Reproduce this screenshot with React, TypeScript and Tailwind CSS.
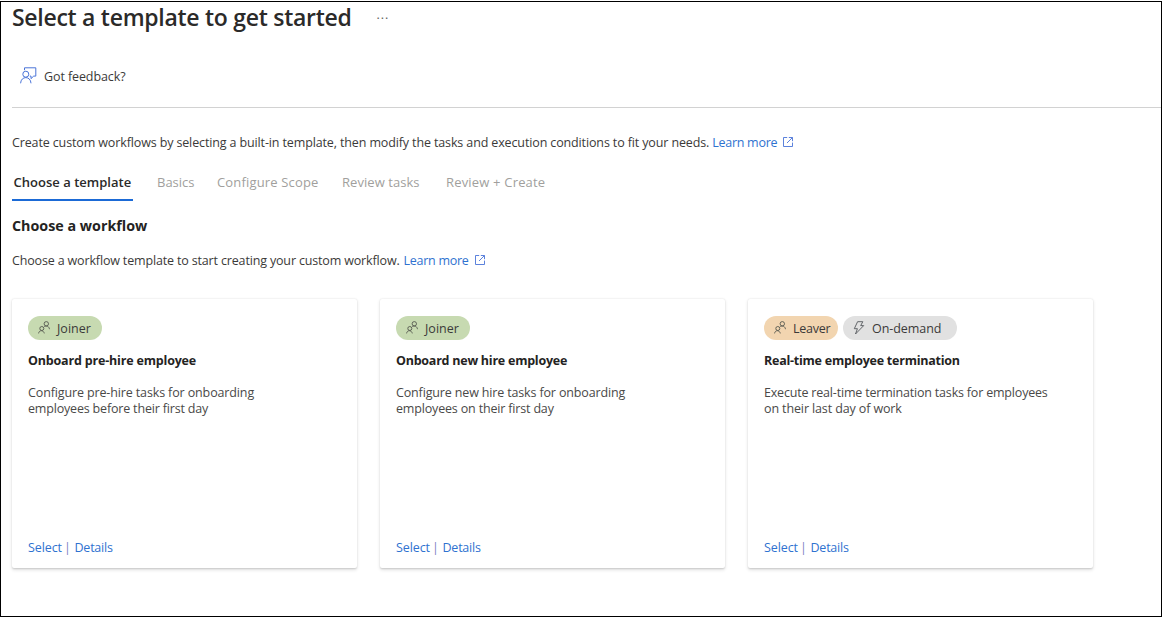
type Text = { text: string; spacing: string };
type Badge = Text & { kind: "joiner" | "leaver" | "demand" };
type Template = { badges: Badge[]; title: Text; lines: Text[] };

const joiner: Badge = { kind: "joiner", text: "Joiner", spacing: "tracking-[0px]" };

const templates: Template[] = [
  {
    badges: [joiner],
    title: { text: "Onboard pre-hire employee", spacing: "tracking-[-0.18px]" },
    lines: [
      { text: "Configure pre-hire tasks for onboarding", spacing: "tracking-[-0.13px]" },
      { text: "employees before their first day", spacing: "tracking-[-0.18px]" },
    ],
  },
  {
    badges: [joiner],
    title: { text: "Onboard new hire employee", spacing: "tracking-[-0.24px]" },
    lines: [
      { text: "Configure new hire tasks for onboarding", spacing: "tracking-[-0.15px]" },
      { text: "employees on their first day", spacing: "tracking-[-0.17px]" },
    ],
  },
  {
    badges: [
      { kind: "leaver", text: "Leaver", spacing: "tracking-[-0.25px]" },
      { kind: "demand", text: "On-demand", spacing: "tracking-[-0.05px]" },
    ],
    title: { text: "Real-time employee termination", spacing: "tracking-[-0.24px]" },
    lines: [
      { text: "Execute real-time termination tasks for employees", spacing: "tracking-[-0.19px]" },
      { text: "on their last day of work", spacing: "tracking-[-0.12px]" },
    ],
  },
];

function PeopleIcon() {
  return (
    <svg className="mb-[2px] shrink-0" width="12" height="13" viewBox="0 0 12 13" fill="none" stroke="#55584f" strokeWidth="0.9">
      <circle cx="8.3" cy="2.8" r="2.2" />
      <path d="M6.3 5.6C8.2 4.3 11 5 11.5 8.2" />
      <circle cx="3.8" cy="7.5" r="2" />
      <path d="M.6 12.4C1 8.8 5.6 8.8 6.3 12.4" />
    </svg>
  );
}

function BoltIcon() {
  return (
    <svg className="mb-px shrink-0" width="12" height="14" viewBox="0 0 12 14" fill="none" stroke="#55585c" strokeWidth="0.9">
      <path d="M4.6.7h5.2L7.7 4.6h3L2.5 13 4.4 7.7H1.3z" />
    </svg>
  );
}

function ExternalIcon() {
  return (
    <svg className="mb-[2px] shrink-0" width="10" height="10" viewBox="0 0 10 10" fill="none" stroke="#4a74d8" strokeWidth="0.9">
      <path d="M4.2.5H.5v9h9V5.6M5.8.5h3.7v3.7M9.4.6 4 6" />
    </svg>
  );
}

function FeedbackIcon() {
  return (
    <svg className="mb-[3px] shrink-0" width="17" height="17" viewBox="0 0 17 17" fill="none" stroke="#4a74d8" strokeWidth="1">
      <path d="M4.5 3.2V.8h11.3v8.3h-2.1L11 11.6V9.1H9.8" />
      <circle cx="5.8" cy="7.2" r="3" />
      <path d="M.6 16.3C.9 8.7 10.7 8.7 11 16.3" />
    </svg>
  );
}

function BadgePill({ badge }: { badge: Badge }) {
  const tone = {
    joiner: "w-[74px] bg-[#c7dab1] pl-[10px] gap-[7px]",
    leaver: "w-[74px] bg-[#f2d5b0] pl-[10px] gap-[7px]",
    demand: "w-[114px] bg-[#e1e1e1] pl-[10px] gap-[7px]",
  }[badge.kind];
  return (
    <span className={`flex h-6 items-center rounded-full text-[#3b3a39] ${tone}`}>
      {badge.kind === "demand" ? <BoltIcon /> : <PeopleIcon />}
      <span className={`pt-[2px] ${badge.spacing}`}>{badge.text}</span>
    </span>
  );
}

function LearnMore() {
  return (
    <a className="flex items-center gap-[6px] text-[#2f72d0]">
      <span className="tracking-[-0.27px]">Learn more</span>
      <ExternalIcon />
    </a>
  );
}

function Card({ template }: { template: Template }) {
  return (
    <article className="flex h-[269px] w-[345px] shrink-0 flex-col rounded-[2px] bg-white px-4 pt-[17px] pb-[11px] shadow-[0_1.6px_3.6px_rgba(0,0,0,0.13),0_0.3px_1.5px_rgba(0,0,0,0.11)]">
      <div className="flex gap-[5px]">
        {template.badges.map((b) => (
          <BadgePill key={b.text} badge={b} />
        ))}
      </div>
      <h3 className={`mt-[12px] font-bold whitespace-nowrap text-[#242322] ${template.title.spacing}`}>
        {template.title.text}
      </h3>
      <p className="mt-[15px] leading-4 whitespace-nowrap text-[#4a4948]">
        {template.lines.map((l) => (
          <span key={l.text} className={`block ${l.spacing}`}>
            {l.text}
          </span>
        ))}
      </p>
      <div className="mt-auto flex text-[#2f72d0]">
        <a className="w-[36px] tracking-[-0.1px]">Select</a>
        <span className="w-[10.500px] text-[#7a82c4]">|</span>
        <a className="tracking-[-0.23px]">Details</a>
      </div>
    </article>
  );
}

export default function App() {
  return (
    <div className="h-[617px] w-[1162px] overflow-hidden bg-white pt-px font-['Open_Sans','Noto_Sans',sans-serif] text-[12.5px] leading-[18px] whitespace-nowrap text-[#3b3a39]">
      <div className="flex h-[616px] flex-col border border-black pl-[11px]">
        <header className="flex h-[30px] items-center gap-[25px]">
          <h1 className="text-[23px] leading-[30px] font-semibold tracking-[-0.28px] text-[#2b2a29]">
            Select a template to get started
          </h1>
          <span className="pt-[3px] tracking-[1px] text-[#605e5c]">···</span>
        </header>
        <div className="mt-[36px] flex h-[18px] items-center gap-[7px] pl-2">
          <FeedbackIcon />
          <span className="tracking-[-0.1px]">Got feedback?</span>
        </div>
        <hr className="mt-[21px] border-[#d2d2d2]" />
        <p className="mt-[26px] flex gap-[3px]">
          <span className="tracking-[-0.129px]">
            Create custom workflows by selecting a built-in template, then modify the tasks and execution conditions to fit
            your needs.
          </span>
          <LearnMore />
        </p>
        <nav className="mt-[21px] flex text-[13px] text-[#a19f9d]">
          <span className="mr-6 h-7 w-[121px] border-b-2 border-[#1b6ad6] pl-[1.5px] font-semibold tracking-[0.02px] text-[#2b2a29]">
            Choose a template
          </span>
          <span className="w-[60px]">Basics</span>
          <span className="w-[125px] tracking-[0.16px]">Configure Scope</span>
          <span className="w-[104px] tracking-[0.05px]">Review tasks</span>
          <span className="tracking-[0.18px]">Review + Create</span>
        </nav>
        <h2 className="mt-[15px] text-[14.3px] leading-5 font-bold text-[#242322]">Choose a workflow</h2>
        <p className="mt-4 flex gap-[4px]">
          <span className="tracking-[-0.157px]">Choose a workflow template to start creating your custom workflow.</span>
          <LearnMore />
        </p>
        <section className="mt-[29px] flex gap-[23px]">
          {templates.map((t) => (
            <Card key={t.title.text} template={t} />
          ))}
        </section>
      </div>
    </div>
  );
}
